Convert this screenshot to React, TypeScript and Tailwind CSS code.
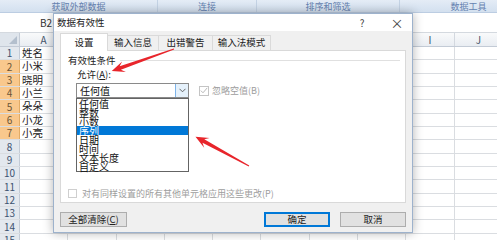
import React from 'react';

const FONT = "font-['Microsoft_YaHei','Noto_Sans_CJK_SC','Noto_Sans',sans-serif]";

const RIBBON = [
  { label: '获取外部数据', w: 'w-[158px]' },
  { label: '连接', w: 'w-[99px]' },
  { label: '排序和筛选', w: 'w-[143px]' },
  { label: '数据工具', w: 'w-[138px]' },
];

const COLS = ['A', 'B', 'C', 'D', 'E', 'F', 'G', 'H', 'I', 'J'];
const NAMES = ['姓名', '小米', '晓明', '小兰', '朵朵', '小龙', '小亮'];
const ROWS = Array.from({ length: 15 }, (_, i) => i + 1);

const TABS = [
  { label: '设置', w: 'w-[48px]', active: true },
  { label: '输入信息', w: 'w-[52px]' },
  { label: '出错警告', w: 'w-[55px]' },
  { label: '输入法模式', w: 'w-[59px]' },
];

const OPTIONS = ['任何值', '整数', '小数', '序列', '日期', '时间', '文本长度', '自定义'];

// 빨간 화살표 (꼬리 → 머리)
function Arrow({ x, y, angle, len }: { x: number; y: number; angle: number; len: number }) {
  const L = len;
  const pts = `0,-0.5 ${L - 9},-1.9 ${L - 13},-5.6 ${L},0 ${L - 13},5.6 ${L - 9},1.9 0,0.5`;
  return <polygon points={pts} fill="#e8252b" transform={`translate(${x} ${y}) rotate(${angle})`} />;
}

function Sheet() {
  return (
    <div className="flex flex-col">
      {/* 열 머리글 */}
      <div className="flex h-[14px] bg-gradient-to-b from-[#f9fafb] to-[#e9edf2] border-b border-[#c3cbd6]">
        <div className="relative w-[20px] shrink-0 bg-[#dfe5ec] border-r border-[#c3cbd6]">
          <div className="absolute right-[2px] bottom-[2px] w-0 h-0 border-l-[8px] border-l-transparent border-b-[8px] border-b-[#b3bfcd]" />
        </div>
        {COLS.map((c) => (
          <div
            key={c}
            className={`w-[48.3px] shrink-0 flex items-center justify-center border-r border-[#d3d8df] text-[10px] leading-none ${
              c === 'B' ? 'bg-[#f9c88d] text-[#5f4a30]' : 'text-[#44546a]'
            }`}
          >
            {c}
          </div>
        ))}
      </div>
      {ROWS.map((r) => {
        const sel = r >= 2 && r <= 7;
        return (
          <div key={r} className="flex h-[13.35px] border-b border-[#dadde1]">
            <div
              className={`w-[20px] shrink-0 flex items-center justify-center text-[10px] leading-none border-r ${
                sel
                  ? 'bg-[#f9c88d] text-[#6b5536] border-[#e2ac66]'
                  : 'bg-[#e3e8ee] text-[#3d5370] border-[#c3cbd6]'
              }`}
            >
              {r}
            </div>
            {COLS.map((c) => (
              <div
                key={c}
                className="w-[48.3px] shrink-0 border-r border-[#dadde1] flex items-center pl-[2px] text-[10.5px] leading-none text-[#222]"
              >
                {c === 'A' && r <= 7 ? NAMES[r - 1] : ''}
              </div>
            ))}
          </div>
        );
      })}
    </div>
  );
}

function Dialog() {
  return (
    <div className="absolute left-[53px] top-[13px] w-[360px] h-[220px] flex flex-col bg-white border border-[#9db2cc] shadow-[0_0_10px_rgba(0,0,0,0.3)]">
      {/* 제목 표시줄 */}
      <div className="h-[17px] flex items-center pl-[3px] text-[#222]">
        <span className="text-[9.5px] leading-none">数据有效性</span>
        <span className="ml-auto w-[20px] text-center text-[10px] leading-none text-[#444]">?</span>
        <span className="ml-[10px] w-[30px] text-center text-[13px] leading-none text-[#444]">×</span>
      </div>

      <div className="flex-1 bg-[#f0f0f0] px-[6px] pt-[2px] flex flex-col">
        {/* 탭 */}
        <div className="flex items-end h-[17px]">
          {TABS.map((t) => (
            <div
              key={t.label}
              className={`${t.w} flex items-center justify-center text-[9.5px] leading-none text-[#222] border-t border-x ${
                t.active
                  ? 'h-[18px] -mb-px bg-white border-[#d9d9d9] relative z-10'
                  : 'h-[15px] bg-[#f0f0f0] border-[#dadada] -ml-px'
              }`}
            >
              {t.label}
            </div>
          ))}
        </div>

        {/* 탭 내용 */}
        <div className="h-[153px] w-[346px] bg-white border border-[#d9d9d9] flex flex-col">
          <div className="flex items-center pt-[4px] pl-[7px] pr-[5px] h-[15px]">
            <span className="text-[9.5px] leading-none text-[#222]">有效性条件</span>
            <div className="flex-1 h-px bg-[#e0e0e0] ml-[4px]" />
          </div>
          <div className="pl-[16px] mt-[3px] text-[9.5px] leading-[10px] text-[#222]">
            允许(<span className="underline">A</span>):
          </div>
          <div className="flex items-center pl-[15px] mt-[4px]">
            <div className="relative w-[113px] h-[15px] flex border border-[#8a8a8a] bg-white">
              <span className="flex-1 pl-[3px] text-[10px] leading-[13px] text-[#111]">任何值</span>
              <div className="w-[13px] h-full bg-[#e5f1fb] border-l border-[#7eb4ea] flex items-center justify-center">
                <svg width="7" height="5" viewBox="0 0 7 5">
                  <path d="M0.5 0.8 L3.5 3.8 L6.5 0.8" fill="none" stroke="#555" strokeWidth="0.9" />
                </svg>
              </div>
              {/* 펼쳐진 목록 */}
              <div className="absolute left-[-1px] top-[14px] w-[113px] border border-[#646464] bg-white flex flex-col z-20">
                {OPTIONS.map((o) => (
                  <div
                    key={o}
                    className={`h-[9px] pl-[2px] text-[10px] leading-[9px] overflow-visible ${
                      o === '序列' ? 'bg-[#0078d7] text-white' : 'text-[#111]'
                    }`}
                  >
                    {o}
                  </div>
                ))}
              </div>
            </div>
            <div className="ml-[10px] w-[10px] h-[10px] border border-[#c4c4c4] bg-white flex items-center justify-center">
              <svg width="8" height="7" viewBox="0 0 8 7">
                <path d="M0.8 3.6 L3 5.8 L7.2 0.9" fill="none" stroke="#b9b9b9" strokeWidth="1" />
              </svg>
            </div>
            <span className="ml-[3px] text-[9px] leading-none text-[#9d9d9d]">忽略空值(B)</span>
          </div>

          <div className="mt-auto mb-[4px] flex items-center pl-[7px]">
            <div className="w-[9px] h-[9px] border border-[#cfcfcf] bg-white" />
            <span className="ml-[5px] text-[9px] leading-none text-[#9d9d9d]">
              对有同样设置的所有其他单元格应用这些更改(P)
            </span>
          </div>
        </div>

        {/* 버튼 */}
        <div className="flex mt-[9px] h-[15px]">
          <div className="w-[67px] h-full bg-[#e1e1e1] border border-[#adadad] flex items-center justify-center text-[9.5px] leading-none text-[#222]">
            全部清除(<span className="underline">C</span>)
          </div>
          <div className="ml-auto w-[66px] h-full bg-[#e1e1e1] border border-[#0078d7] shadow-[inset_0_0_0_1px_#0078d7] flex items-center justify-center text-[9.5px] leading-none text-[#222]">
            确定
          </div>
          <div className="ml-[10px] w-[66px] h-full bg-[#e1e1e1] border border-[#adadad] flex items-center justify-center text-[9.5px] leading-none text-[#222]">
            取消
          </div>
        </div>
      </div>
    </div>
  );
}

export default function App() {
  return (
    <div className={`relative w-[497px] h-[240px] overflow-hidden bg-white ${FONT}`}>
      {/* 리본 그룹 이름 */}
      <div className="flex h-[13px] bg-gradient-to-b from-[#e4ecf6] to-[#d3e0ef] border-b border-[#bccde2]">
        {RIBBON.map((g) => (
          <div
            key={g.label}
            className={`${g.w} shrink-0 flex items-center justify-center border-r border-[#c3d2e4] text-[9px] leading-none text-[#6582b0]`}
          >
            {g.label}
          </div>
        ))}
      </div>

      {/* 이름 상자 */}
      <div className="h-[20px] flex items-center border-b border-[#d4d9df]">
        <span className="ml-[40px] text-[10px] leading-none text-[#333]">B2</span>
      </div>

      <Sheet />
      <Dialog />

      <svg className="absolute inset-0 pointer-events-none" width="497" height="240">
        <Arrow x={174} y={49} angle={160.5} len={66} />
        <Arrow x={249} y={166} angle={208.7} len={61} />
      </svg>
    </div>
  );
}
